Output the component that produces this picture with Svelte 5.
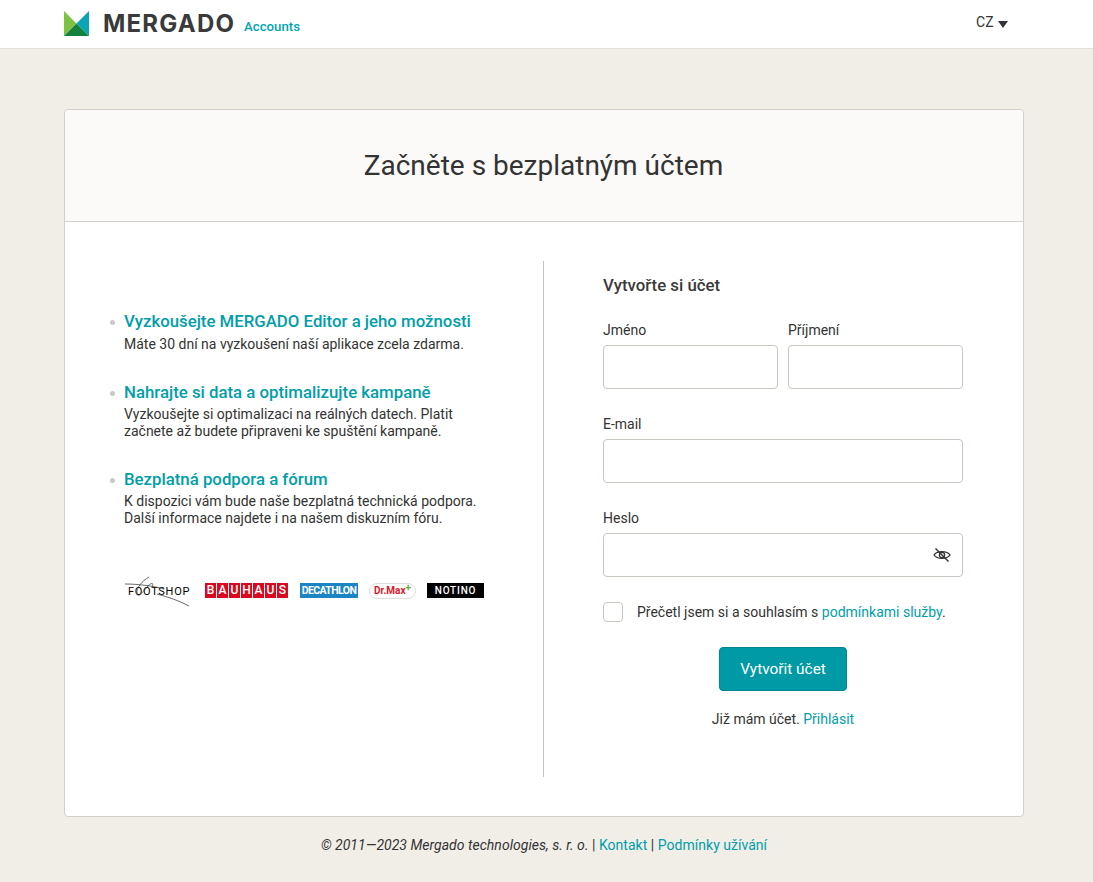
<script lang="ts">
  const benefits = [
    {
      title: 'Vyzkoušejte MERGADO Editor a jeho možnosti',
      lines: ['Máte 30 dní na vyzkoušení naší aplikace zcela zdarma.']
    },
    {
      title: 'Nahrajte si data a optimalizujte kampaně',
      lines: ['Vyzkoušejte si optimalizaci na reálných datech. Platit', 'začnete až budete připraveni ke spuštění kampaně.']
    },
    {
      title: 'Bezplatná podpora a fórum',
      lines: ['K dispozici vám bude naše bezplatná technická podpora.', 'Další informace najdete i na našem diskuzním fóru.']
    }
  ];
</script>

<header class="topbar">
  <div class="topbar-inner">
    <div class="brand">
      <svg class="mark" width="25" height="25" viewBox="0 0 25 25" aria-hidden="true">
        <path d="M0 0 L12.5 12.5 L0 25 Z" fill="#7dc242" />
        <path d="M25 0 L12.5 12.5 L25 25 Z" fill="#0aa5b5" />
        <path d="M0 25 L12.5 12.5 L25 25 Z" fill="#14803f" />
      </svg>
      <span class="wordmark">MERGADO</span>
      <span class="accounts">Accounts</span>
    </div>
    <div class="lang">CZ <span class="caret"></span></div>
  </div>
</header>

<main class="page">
  <section class="card">
    <div class="card-head">
      <h1>Začněte s bezplatným účtem</h1>
    </div>
    <div class="card-body">
      <div class="info">
        <ul>
          {#each benefits as item}
            <li>
              <h3>{item.title}</h3>
              <p>{#each item.lines as line}{line}<br />{/each}</p>
            </li>
          {/each}
        </ul>
        <div class="logos">
          <div class="footshop">
            <span>FOOTSHOP</span>
            <svg width="66" height="34" viewBox="0 0 66 34" aria-hidden="true">
              <path d="M1 10 C14 10 30 12 40 15 M25 3 C18 7 12 14 13 20 C14 24 19 18 24 12 C28 8 30 9 28 13 M33 20 C44 23 56 27 65 32" fill="none" stroke="#444" stroke-width="0.8" />
            </svg>
          </div>
          <div class="bauhaus">
            {#each 'BAUHAUS'.split('') as letter}<span>{letter}</span>{/each}
          </div>
          <div class="decathlon">DECATHLON</div>
          <div class="drmax">Dr.Max<i>+</i></div>
          <div class="notino">NOTINO</div>
        </div>
      </div>

      <form class="signup">
        <h2>Vytvořte si účet</h2>
        <div class="row two">
          <label>Jméno<input type="text" /></label>
          <label>Příjmení<input type="text" /></label>
        </div>
        <div class="row">
          <label>E-mail<input type="email" /></label>
        </div>
        <div class="row">
          <label>
            Heslo
            <span class="password">
              <input type="password" />
              <svg class="eye" width="18" height="18" viewBox="0 0 18 18" aria-hidden="true">
                <path d="M1 9 C4 4.5 14 4.5 17 9 C14 13.5 4 13.5 1 9 Z" fill="none" stroke="#333" stroke-width="1.3" />
                <circle cx="9" cy="9" r="2.6" fill="none" stroke="#333" stroke-width="1.3" />
                <path d="M2.5 2.5 L15.5 15.5" stroke="#333" stroke-width="1.4" />
              </svg>
            </span>
          </label>
        </div>
        <div class="terms">
          <span class="checkbox"></span>
          <span>Přečetl jsem si a souhlasím s <a href="#terms">podmínkami služby</a>.</span>
        </div>
        <button type="button" class="submit">Vytvořit účet</button>
        <p class="login">Již mám účet. <a href="#login">Přihlásit</a></p>
      </form>
    </div>
  </section>

  <footer>
    <em>© 2011—2023 Mergado technologies, s. r. o.</em> | <a href="#contact">Kontakt</a> | <a href="#tos">Podmínky užívání</a>
  </footer>
</main>

<style>
  :global(body) {
    background: #f1eee8;
    font-family: Roboto, "Liberation Sans", sans-serif;
    color: #333;
    font-size: 14px;
  }

  a {
    color: #009eaa;
    text-decoration: none;
  }

  .topbar {
    background: #fff;
    height: 48px;
    border-bottom: 1px solid #e3e0da;
  }

  .topbar-inner {
    width: 960px;
    margin-left: 64px;
    height: 100%;
    display: flex;
    justify-content: space-between;
  }

  .brand {
    display: flex;
    align-items: center;
    height: 46px;
  }

  .mark {
    margin-right: 14px;
  }

  .wordmark {
    font-family: Inter, "Open Sans", sans-serif;
    font-weight: 700;
    font-size: 24px;
    letter-spacing: 1.2px;
    color: #3a3a3a;
    margin-right: 9px;
  }

  .accounts {
    color: #00a5b0;
    font-weight: 500;
    font-size: 13.2px;
    margin-top: 7px;
  }

  .lang {
    margin: 14px 16px 0 0;
    font-size: 14px;
    line-height: 16px;
  }

  .caret {
    display: inline-block;
    width: 0;
    height: 0;
    border-left: 5px solid transparent;
    border-right: 5px solid transparent;
    border-top: 7px solid #333;
    margin-left: 1px;
    vertical-align: -1px;
  }

  .page {
    width: 960px;
    margin-left: 64px;
    padding-top: 60px;
  }

  .card {
    background: #fff;
    border: 1px solid #d2d0cb;
    border-radius: 4px;
    height: 708px;
    box-sizing: border-box;
  }

  .card-head {
    height: 112px;
    padding-right: 1px;
    box-sizing: border-box;
    background: #fbfaf8;
    border-bottom: 1px solid #d2d0cb;
    border-radius: 4px 4px 0 0;
    display: flex;
    align-items: center;
    justify-content: center;
  }

  h1 {
    margin: 0;
    font-weight: 400;
    font-size: 28px;
    color: #333;
  }

  .card-body {
    display: grid;
    grid-template-columns: 479px 1fr;
    padding-top: 39px;
  }

  .info {
    height: 516px;
    border-right: 1px solid #c4c4c4;
    box-sizing: border-box;
    padding: 49px 0 0 59px;
  }

  ul {
    margin: 0;
    padding: 0;
    list-style: none;
    display: grid;
    gap: 28.5px;
  }

  li {
    position: relative;
  }

  li::before {
    content: '';
    position: absolute;
    left: -14px;
    top: 10px;
    width: 5px;
    height: 5px;
    border-radius: 50%;
    background: #c9c9c6;
  }

  h3 {
    margin: 0 0 3.5px;
    font-size: 16.8px;
    line-height: 22px;
    font-weight: 500;
    color: #009eaa;
  }

  li p {
    margin: 0;
    font-size: 14px;
    line-height: 16.5px;
  }

  .logos {
    display: flex;
    align-items: center;
    margin-top: 47.5px;
  }

  .footshop {
    position: relative;
    width: 66px;
    height: 34px;
    margin-right: 15px;
  }

  .footshop svg {
    position: absolute;
    left: 0;
    top: 0;
  }

  .footshop span {
    position: absolute;
    left: 4px;
    top: 12px;
    font-size: 11px;
    line-height: 12px;
    letter-spacing: 0.7px;
    color: #000;
  }

  .bauhaus {
    width: 83px;
    height: 15px;
    display: flex;
    gap: 1px;
    margin-right: 12px;
  }

  .bauhaus span {
    flex: 1;
    background: #d9091f;
    color: #fff;
    font-size: 12px;
    font-weight: 500;
    line-height: 15px;
    text-align: center;
  }

  .decathlon {
    width: 58px;
    height: 15px;
    background: #1a84c4;
    color: #fff;
    font-size: 10.5px;
    font-weight: 700;
    letter-spacing: -0.6px;
    line-height: 15px;
    text-align: center;
    margin-right: 11px;
  }

  .drmax {
    width: 47px;
    height: 16px;
    box-sizing: border-box;
    border: 1px solid #ddd;
    border-radius: 8px;
    color: #d5182b;
    font-size: 10px;
    font-weight: 700;
    line-height: 14px;
    text-align: center;
    margin-right: 11px;
  }

  .drmax i {
    color: #5fb030;
    font-style: normal;
    vertical-align: 3px;
    font-size: 10px;
    line-height: 0;
  }

  .notino {
    width: 57px;
    height: 15px;
    background: #000;
    color: #fff;
    font-size: 10px;
    font-weight: 500;
    letter-spacing: 0.8px;
    line-height: 15px;
    text-align: center;
  }

  .signup {
    padding: 0 60px 0 59px;
  }

  h2 {
    margin: 14px 0 0;
    font-size: 16.8px;
    line-height: 20px;
    font-weight: 500;
    color: #3a3a3a;
  }

  .row {
    margin-top: 25px;
    display: grid;
    gap: 10px;
  }

  .row.two {
    grid-template-columns: 1fr 1fr;
  }

  label {
    display: block;
    font-size: 14px;
    line-height: 20px;
  }

  input {
    display: block;
    width: 100%;
    height: 44px;
    box-sizing: border-box;
    margin-top: 5px;
    border: 1px solid #cbc7c0;
    border-radius: 4px;
    background: #fff;
    outline: none;
  }

  .password {
    display: block;
    position: relative;
  }

  .eye {
    position: absolute;
    right: 12px;
    top: 13px;
  }

  .terms {
    display: flex;
    align-items: center;
    gap: 14px;
    margin-top: 25px;
    height: 20px;
    white-space: nowrap;
  }

  .checkbox {
    width: 20px;
    height: 20px;
    box-sizing: border-box;
    border: 1px solid #cbc7c0;
    border-radius: 4px;
    background: #fff;
    flex: none;
  }

  .submit {
    display: block;
    margin: 25px auto 0;
    width: 128px;
    height: 44px;
    background: #009aa6;
    border: 1px solid #00848f;
    border-radius: 4px;
    color: #fff;
    font-family: inherit;
    font-size: 15.4px;
  }

  .login {
    margin: 20px 0 0;
    text-align: center;
    line-height: 16px;
  }

  footer {
    text-align: center;
    font-size: 14px;
    line-height: 16px;
    padding-top: 20px;
    letter-spacing: 0.025px;
  }
</style>
